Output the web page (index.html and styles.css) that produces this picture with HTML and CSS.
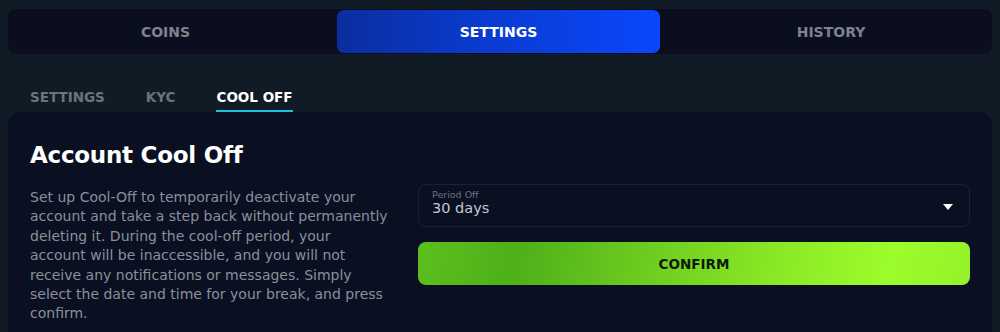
FILE: index.html
```html
<!DOCTYPE html>
<html lang="en">
<head>
<meta charset="utf-8">
<title>Account Cool Off</title>
<link rel="stylesheet" href="styles.css">
</head>
<body>
<div class="page">
  <nav class="tabs">
    <div class="tab">COINS</div>
    <div class="tab active">SETTINGS</div>
    <div class="tab">HISTORY</div>
  </nav>
  <nav class="subtabs">
    <div class="subtab">SETTINGS</div>
    <div class="subtab">KYC</div>
    <div class="subtab active">COOL OFF</div>
  </nav>
  <section class="card">
    <h1 class="title">Account Cool Off</h1>
    <div class="grid">
      <p class="desc">Set up Cool-Off to temporarily deactivate your account and take a step back without permanently deleting it. During the cool-off period, your account will be inaccessible, and you will not receive any notifications or messages. Simply select the date and time for your break, and press confirm.</p>
      <div class="form">
        <div class="select">
          <div class="select-text">
            <span class="select-label">Period Off</span>
            <span class="select-value">30 days</span>
          </div>
          <span class="caret"></span>
        </div>
        <button class="confirm">CONFIRM</button>
      </div>
    </div>
  </section>
</div>
</body>
</html>
```

FILE: styles.css
```css
* { box-sizing: border-box; }
html, body { margin: 0; padding: 0; }
body {
  background: #101b26;
  font-family: "DejaVu Sans", "Liberation Sans", sans-serif;
  color: #fff;
  height: 332px;
  overflow: hidden;
}
.page { padding: 9px 8px 0; }

.tabs {
  display: grid;
  grid-template-columns: 329px 323px 1fr;
  height: 45px;
  background: #0b0e1f;
  border-radius: 8px;
  padding: 1px 0;
}
.tab {
  display: flex;
  align-items: center;
  justify-content: center;
  font-weight: 700;
  font-size: 14px;
  color: #7e828c;
  border-radius: 7px;
}
.tab:first-child { padding-right: 14px; }
.tab:last-child { padding-left: 10px; }
.tab.active {
  color: #fff;
  background: linear-gradient(90deg, #0b2d9e 0%, #0a3bd0 45%, #0a47fd 100%);
}

.subtabs {
  display: flex;
  gap: 41px;
  padding: 35px 22px 0;
}
.subtab {
  font-weight: 700;
  font-size: 13.5px;
  color: #6c737d;
  padding-bottom: 4px;
  border-bottom: 2px solid transparent;
  line-height: 17px;
}
.subtab.active {
  color: #fff;
  border-bottom-color: #1cc0dc;
}

.card {
  background: #0a1022;
  border-radius: 13px 13px 0 0;
  padding: 30px 22px 16px;
}
.title {
  margin: 0;
  font-size: 23px;
  line-height: 27px;
  font-weight: 700;
  letter-spacing: -0.25px;
  color: #fff;
}
.grid {
  display: grid;
  grid-template-columns: 359px 1fr;
  gap: 29px;
  margin-top: 19px;
}
.desc {
  margin: 0;
  font-size: 14px;
  line-height: 19.4px;
  color: #8a8f99;
}
.form {
  display: flex;
  flex-direction: column;
  gap: 15px;
  margin-top: -4px;
}
.select {
  height: 43px;
  border: 1px solid #1b2134;
  border-radius: 8px;
  display: flex;
  align-items: center;
  justify-content: space-between;
  padding: 0 16px 0 13px;
}
.select-text {
  display: flex;
  flex-direction: column;
  padding-bottom: 6px;
}
.select-label {
  font-size: 9.5px;
  line-height: 11px;
  color: #6a7080;
}
.select-value {
  font-size: 14.5px;
  line-height: 17px;
  color: #c4c8d0;
}
.caret {
  width: 0;
  height: 0;
  border-left: 5px solid transparent;
  border-right: 5px solid transparent;
  border-top: 6px solid #fff;
  margin-top: 2px;
}
.confirm {
  height: 43px;
  border: none;
  border-radius: 8px;
  font-family: inherit;
  font-weight: 700;
  font-size: 13.5px;
  color: #0c1a0b;
  background: linear-gradient(100deg, #5cbf1e 0%, #4eb01a 18%, #6cca1f 40%, #8be826 65%, #9dfc2b 85%, #95f229 100%);
  cursor: pointer;
}
```
